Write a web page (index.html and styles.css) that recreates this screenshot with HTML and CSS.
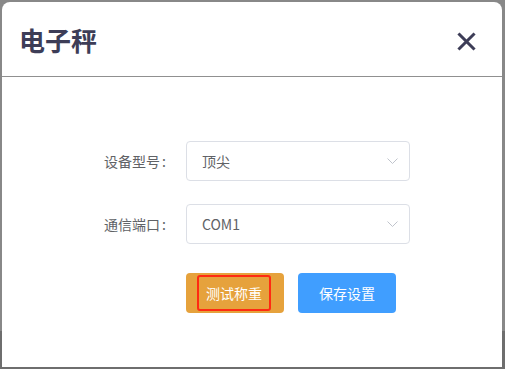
FILE: index.html
```html
<!DOCTYPE html>
<html lang="zh">
<head>
<meta charset="utf-8">
<link rel="stylesheet" href="styles.css">
</head>
<body>
<div class="dialog">
  <div class="header">
    <div class="title">电子秤</div>
    <svg class="close" width="19" height="19" viewBox="0 0 19 19"><path d="M2.5 2.5 L16.5 16.5 M16.5 2.5 L2.5 16.5" stroke="#3d3d57" stroke-width="3" stroke-linecap="square"/></svg>
  </div>
  <div class="body">
    <div class="row">
      <label class="label">设备型号<span class="colon">:</span></label>
      <div class="select"><span>顶尖</span><svg width="11" height="6" viewBox="0 0 11 6"><path d="M0.5 0.5 L5.5 5.5 L10.5 0.5" fill="none" stroke="#c0c4cc" stroke-width="1"/></svg></div>
    </div>
    <div class="row row-last">
      <label class="label">通信端口<span class="colon">:</span></label>
      <div class="select"><span>COM1</span><svg width="11" height="6" viewBox="0 0 11 6"><path d="M0.5 0.5 L5.5 5.5 L10.5 0.5" fill="none" stroke="#c0c4cc" stroke-width="1"/></svg></div>
    </div>
    <div class="buttons">
      <button class="btn btn-warn"><span class="focus">测试称重</span></button>
      <button class="btn btn-primary">保存设置</button>
    </div>
  </div>
</div>
</body>
</html>
```
FILE: styles.css
```css
html, body {
  margin: 0;
  height: 369px;
  overflow: hidden;
}
body {
  background: linear-gradient(#888888 0, #888888 331px, #6e6e6e 331px);
  padding: 2px 3px 0 2px;
  box-sizing: border-box;
  font-family: "Noto Sans CJK SC", "Noto Sans", sans-serif;
}
.dialog {
  width: 500px;
  height: 365px;
  background: #fff;
  border-radius: 8px 8px 0 0;
}
.header {
  height: 74px;
  border-bottom: 1px solid #909090;
  display: flex;
  align-items: center;
  justify-content: space-between;
  padding: 0 26px 0 17px;
}
.title {
  font-size: 26px;
  font-weight: bold;
  color: #3d3d57;
  line-height: 1;
  margin-top: 1px;
}
.close {
  display: block;
  margin-top: 4px;
}
.body {
  padding: 64px 0 0 84px;
}
.row {
  display: flex;
  align-items: center;
  margin-bottom: 23px;
}
.row-last {
  margin-bottom: 29px;
}
.label {
  width: 100px;
  box-sizing: border-box;
  padding-right: 20px;
  text-align: right;
  font-size: 14px;
  color: #606266;
}
.colon {
  margin-left: 2px;
}
.select {
  width: 224px;
  height: 40px;
  box-sizing: border-box;
  border: 1px solid #dcdfe6;
  border-radius: 4px;
  display: flex;
  align-items: center;
  justify-content: space-between;
  padding: 0 11px 0 15px;
  font-size: 14px;
  color: #606266;
}
.select svg {
  display: block;
}
.buttons {
  display: flex;
  gap: 14px;
  padding-left: 100px;
}
.btn {
  width: 98px;
  height: 40px;
  border: none;
  border-radius: 4px;
  color: #fff;
  font-size: 14px;
  font-family: inherit;
  display: flex;
  align-items: center;
  justify-content: center;
  padding: 0;
}
.btn-warn {
  background: #e6a23c;
}
.btn-primary {
  background: #409eff;
}
.focus {
  width: 74px;
  height: 36px;
  box-sizing: border-box;
  border: 2px solid #ff2a12;
  border-radius: 3px;
  display: flex;
  align-items: center;
  justify-content: center;
  margin-right: 2px;
}
```
